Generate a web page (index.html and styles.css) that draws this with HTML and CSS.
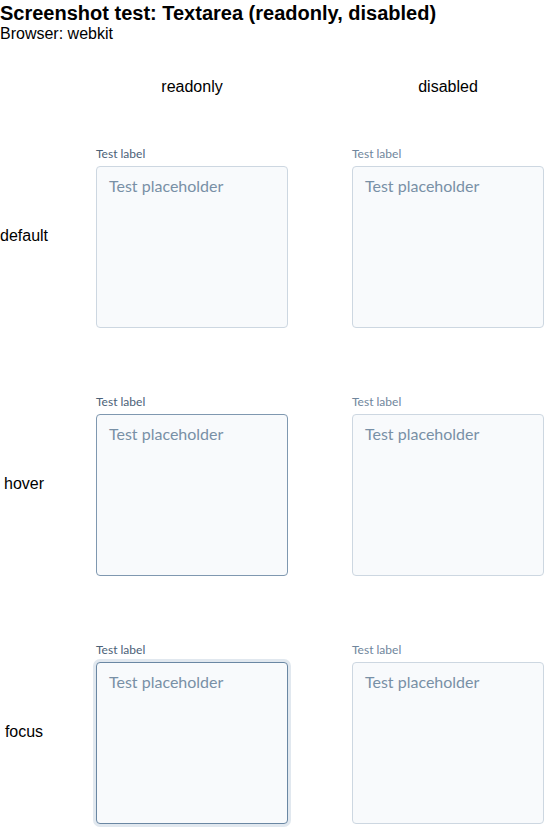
FILE: index.html
```html
<!DOCTYPE html>
<html>
<head>
<meta charset="utf-8">
<link rel="stylesheet" href="styles.css">
</head>
<body>
<h1 class="title">Screenshot test: Textarea (readonly, disabled)</h1>
<p class="subtitle">Browser: webkit</p>
<div class="grid">
  <div class="corner"></div>
  <div class="colhead">readonly</div>
  <div class="colhead">disabled</div>

  <div class="rowhead">default</div>
  <div class="cell"><div class="field"><label class="label">Test label</label><textarea class="ta" readonly placeholder="Test placeholder"></textarea></div></div>
  <div class="cell"><div class="field"><label class="label dis">Test label</label><textarea class="ta" disabled placeholder="Test placeholder"></textarea></div></div>

  <div class="rowhead">hover</div>
  <div class="cell"><div class="field"><label class="label">Test label</label><textarea class="ta hover" readonly placeholder="Test placeholder"></textarea></div></div>
  <div class="cell"><div class="field"><label class="label dis">Test label</label><textarea class="ta" disabled placeholder="Test placeholder"></textarea></div></div>

  <div class="rowhead">focus</div>
  <div class="cell"><div class="field"><label class="label">Test label</label><textarea class="ta focus" readonly placeholder="Test placeholder"></textarea></div></div>
  <div class="cell"><div class="field"><label class="label dis">Test label</label><textarea class="ta" disabled placeholder="Test placeholder"></textarea></div></div>
</div>
</body>
</html>
```
FILE: styles.css
```css
html, body {
  margin: 0;
  padding: 0;
  background: #fff;
  font-family: "Liberation Sans", Arial, sans-serif;
  color: #000;
}
.title {
  font-size: 20px;
  font-weight: bold;
  line-height: 23px;
  margin: 2px 0 0 0;
}
.subtitle {
  font-size: 16px;
  line-height: 18px;
  margin: 0;
}
.grid {
  display: grid;
  grid-template-columns: 64px 256px 256px;
  grid-template-rows: 52px 248px 248px 248px;
  margin-top: 18px;
  width: 576px;
}
.colhead {
  font-size: 16px;
  display: flex;
  align-items: center;
  justify-content: center;
}
.rowhead {
  font-size: 16px;
  display: flex;
  align-items: center;
  justify-content: center;
  padding-right: 16px;
  padding-bottom: 2px;
}
.cell {
  display: flex;
  align-items: center;
  justify-content: center;
}
.field {
  display: flex;
  flex-direction: column;
  width: 192px;
}
.label {
  font-family: Lato, "Noto Sans", sans-serif;
  font-size: 12px;
  line-height: 14px;
  color: #4b6177;
  padding-top: 1px;
  margin-bottom: 5px;
}
.label.dis {
  color: #70869c;
}
.ta {
  box-sizing: border-box;
  width: 192px;
  height: 162px;
  margin: 0;
  resize: none;
  border: 1px solid #cdd7e1;
  border-radius: 4px;
  background: #f8fafc;
  padding: 9px 12px 10px;
  font-family: Lato, "Noto Sans", sans-serif;
  font-size: 16px;
  line-height: 20px;
  color: #2d3f51;
  outline: none;
}
.ta::placeholder {
  color: #7890a6;
  opacity: 1;
}
.ta:disabled {
  background: #f8fafc;
}
.ta.hover {
  border-color: #7f98b0;
}
.ta.focus {
  border-color: #6a87a3;
  box-shadow: 0 0 0 3px #e1e8ef;
}
```
